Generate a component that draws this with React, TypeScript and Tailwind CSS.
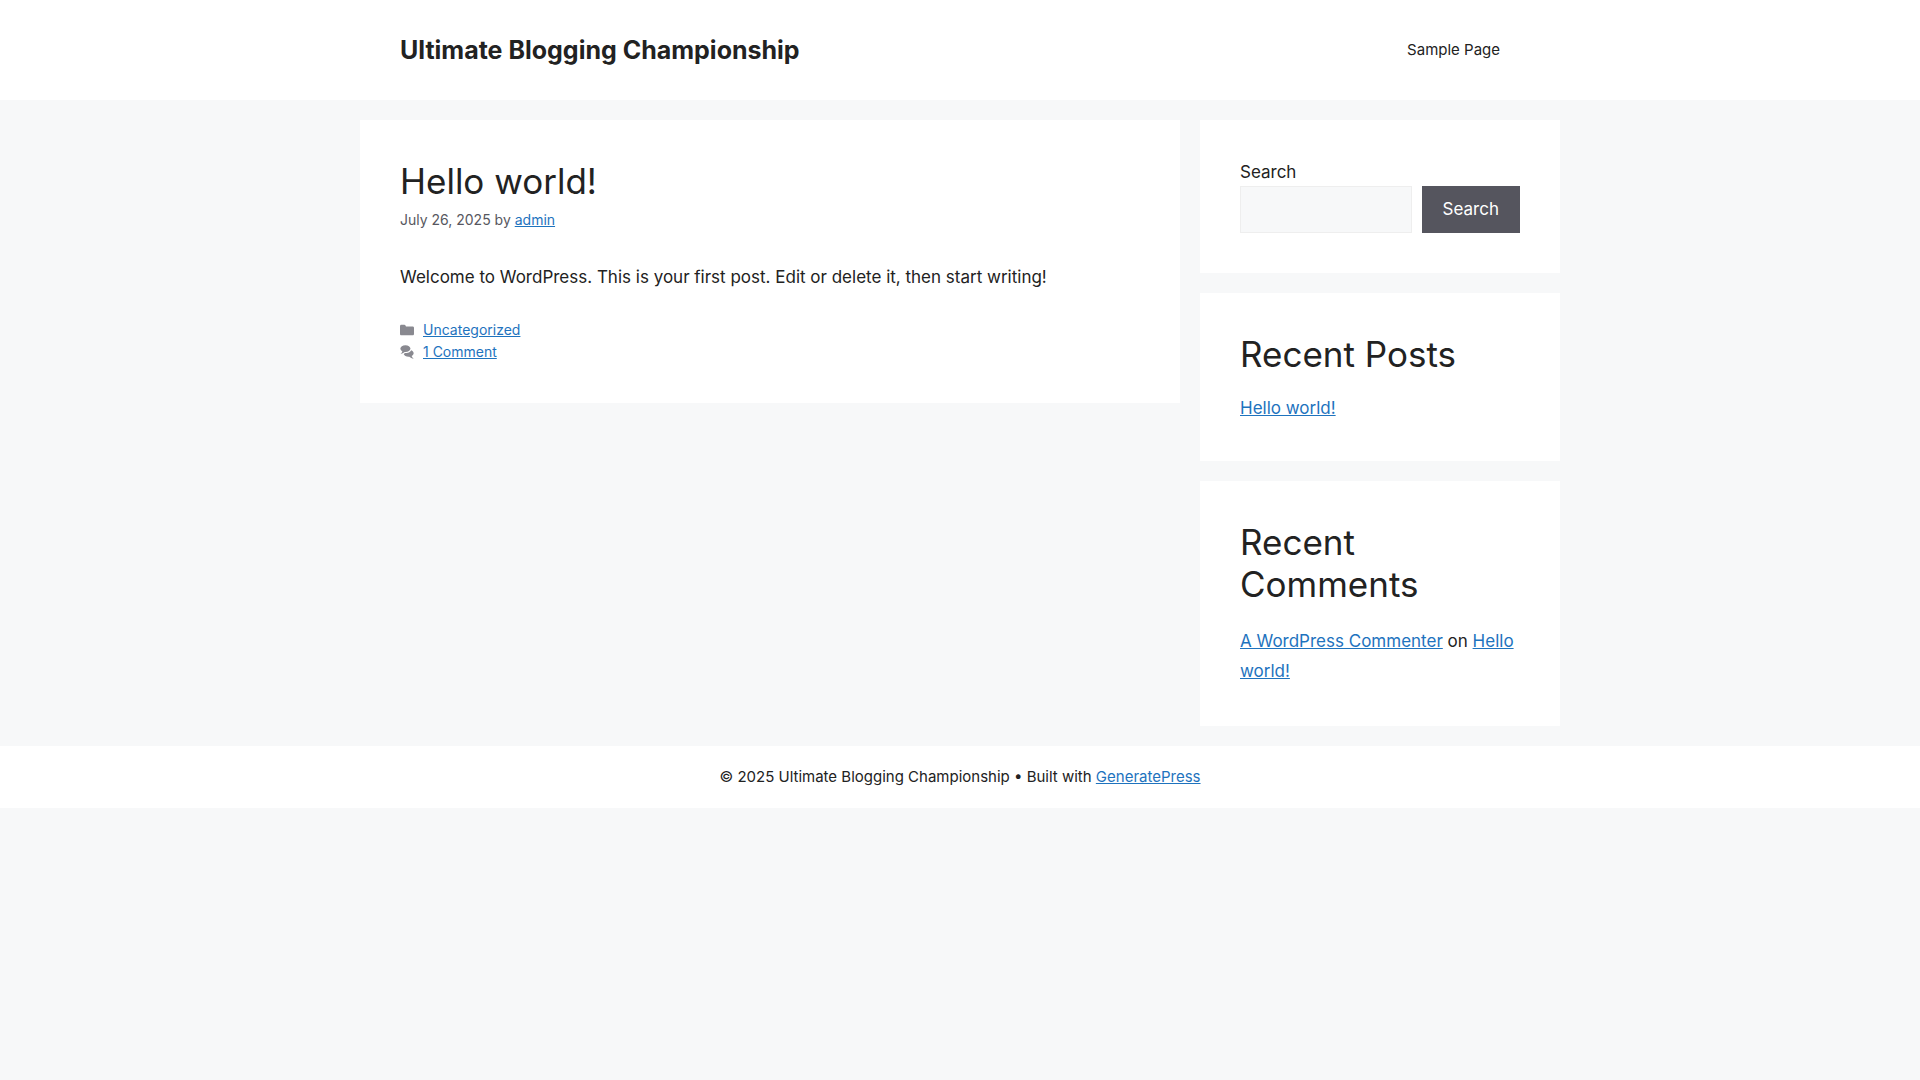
import type { ReactNode } from "react";

const linkClass = "text-[#1e73be] underline hover:text-black";

export default function App() {
  return (
    <div className="min-h-screen bg-[#f7f8f9] font-['Inter',sans-serif] text-[17px] leading-[30px] text-[#222222]">
      <Header />
      <div className="mx-auto flex max-w-[1200px] items-start gap-5 py-5">
        <main className="min-w-0 flex-1">
          <Post />
        </main>
        <aside className="w-[30%] shrink-0 space-y-5">
          <SearchWidget />
          <Widget title="Recent Posts">
            <ul className="leading-[25px]">
              <li>
                <a href="#hello-world" className={linkClass}>
                  Hello world!
                </a>
              </li>
            </ul>
          </Widget>
          <Widget title="Recent Comments">
            <p>
              <a href="#commenter" className={linkClass}>
                A WordPress Commenter
              </a>{" "}
              on{" "}
              <a href="#hello-world" className={linkClass}>
                Hello world!
              </a>
            </p>
          </Widget>
        </aside>
      </div>
      <Footer />
    </div>
  );
}

function Header() {
  return (
    <header className="bg-white">
      <div className="mx-auto flex max-w-[1200px] items-center justify-between px-10 py-5">
        <a href="#home" className="text-[25px] font-bold">
          Ultimate Blogging Championship
        </a>
        <nav>
          <a
            href="#sample-page"
            className="block px-5 text-[15px] leading-[60px]"
          >
            Sample Page
          </a>
        </nav>
      </div>
    </header>
  );
}

function Post() {
  return (
    <article id="hello-world" className="bg-white p-10">
      <h2 className="text-[35px] leading-[42px]">
        <a href="#hello-world">Hello world!</a>
      </h2>
      <div className="mt-[7px] text-[14px] leading-[22px] text-[#575760]">
        July 26, 2025 by{" "}
        <a href="#admin" className={linkClass}>
          admin
        </a>
      </div>
      <p className="mt-[31px]">
        Welcome to WordPress. This is your first post. Edit or delete it, then
        start writing!
      </p>
      <footer className="mt-[27px] text-[14px] leading-[22px] text-[#575760]">
        <div className="flex items-center gap-[9px]">
          <FolderIcon />
          <a href="#uncategorized" className={linkClass}>
            Uncategorized
          </a>
        </div>
        <div className="flex items-center gap-[9px]">
          <CommentsIcon />
          <a href="#comments" className={linkClass}>
            1 Comment
          </a>
        </div>
      </footer>
    </article>
  );
}

function SearchWidget() {
  return (
    <form className="bg-white p-10" onSubmit={(e) => e.preventDefault()}>
      <label htmlFor="search" className="mb-[2px] block leading-[24px]">
        Search
      </label>
      <div className="flex gap-[10px]">
        <input
          id="search"
          type="search"
          className="min-w-0 flex-1 border border-[#eeeeee] bg-[#f7f8f9] px-2"
        />
        <button
          type="submit"
          className="border border-[#55555e] bg-[#55555e] px-5 py-[9px] leading-[27px] text-white"
        >
          Search
        </button>
      </div>
    </form>
  );
}

function Widget({ title, children }: { title: string; children: ReactNode }) {
  return (
    <section className="bg-white p-10">
      <h2 className="mb-[21px] text-[35px] leading-[42px]">{title}</h2>
      {children}
    </section>
  );
}

function Footer() {
  return (
    <footer className="bg-white p-5 text-center text-[15px] leading-[22px]">
      © 2025 Ultimate Blogging Championship • Built with{" "}
      <a href="#generatepress" className={linkClass}>
        GeneratePress
      </a>
    </footer>
  );
}

function FolderIcon() {
  return (
    <svg viewBox="0 0 512 512" className="size-[14px] fill-[#898990]" aria-hidden="true">
      <path d="M0 112c0-26.51 21.49-48 48-48h110.014a48 48 0 0143.592 27.907l12.349 26.791A16 16 0 00228.486 128H464c26.51 0 48 21.49 48 48v224c0 26.51-21.49 48-48 48H48c-26.51 0-48-21.49-48-48V112z" />
    </svg>
  );
}

function CommentsIcon() {
  return (
    <svg viewBox="0 0 512 512" className="size-[14px] fill-[#898990]" aria-hidden="true">
      <path d="M132.838 329.973a435.298 435.298 0 0016.769-9.004c13.363-7.574 26.587-16.142 37.419-25.507 7.544.597 15.27.925 23.098.925 54.905 0 105.634-15.311 143.285-41.28 23.728-16.365 43.115-37.692 54.155-62.645 54.739 22.205 91.498 63.272 91.498 110.286 0 42.186-29.558 79.498-75.09 102.828 23.46 49.216 75.09 101.709 75.09 101.709s-115.837-38.35-154.424-78.46c-9.956 1.12-20.297 1.758-30.793 1.758-88.727 0-162.927-43.071-181.007-100.61z" />
      <path d="M383.371 132.502c0 70.603-82.961 127.787-185.216 127.787-10.496 0-20.837-.639-30.793-1.757-38.587 40.093-154.424 78.429-154.424 78.429s51.63-52.472 75.09-101.67c-45.532-23.321-75.09-60.619-75.09-102.79C12.938 61.9 95.9 4.716 198.155 4.716 300.41 4.715 383.37 61.9 383.37 132.502z" />
    </svg>
  );
}
